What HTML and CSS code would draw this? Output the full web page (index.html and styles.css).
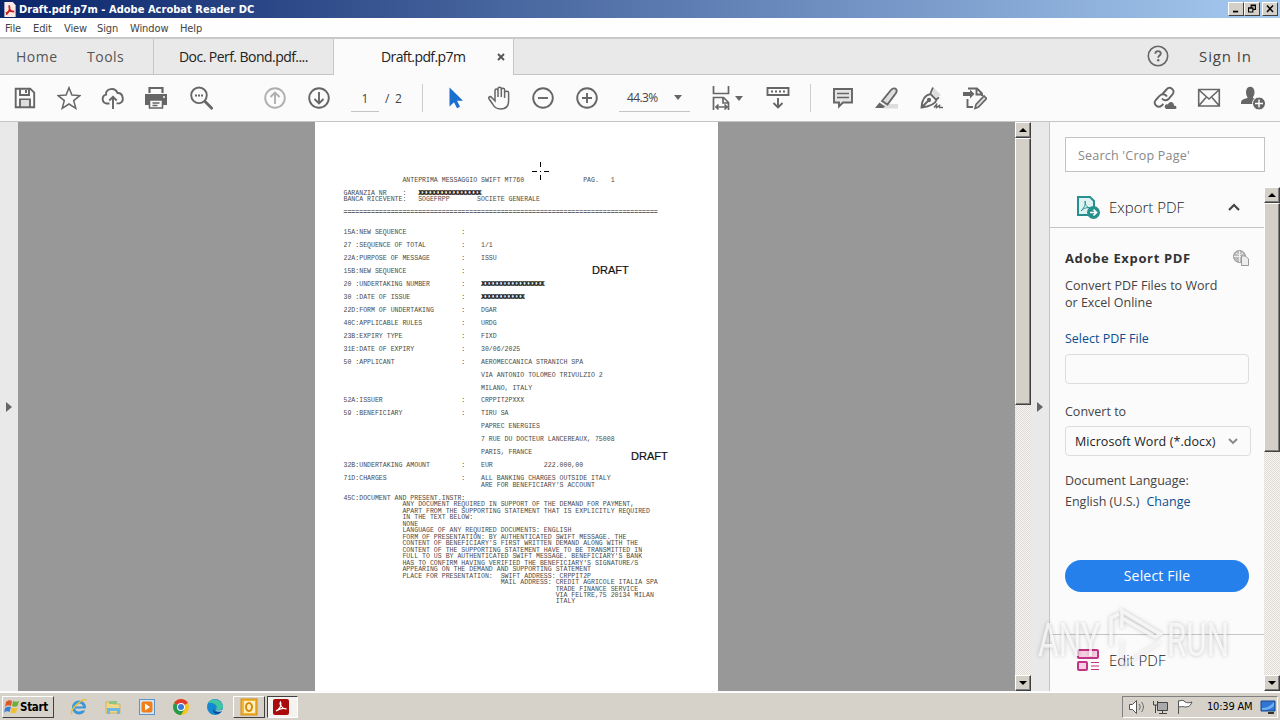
FILE: index.html
```html
<!DOCTYPE html>
<html lang="en">
<head>
<meta charset="utf-8">
<title>Draft.pdf.p7m - Adobe Acrobat Reader DC</title>
<link rel="stylesheet" href="styles.css">
</head>
<body>
<div class="desktop">
<header class="titlebar">
  <svg class="app-icon" viewBox="0 0 12 16"><path d="M0 0h9l3 3.500V16H0z" fill="#fbe9e7"/><path d="M2 13.500C5.500 10 6 6 5 3.500M5 4C5 8.500 7 10.500 10.500 10.500M1.500 12C4 9.500 7 9 10.500 10" fill="none" stroke="#c9201c" stroke-width="1.600"/></svg>
  <span class="title-text">Draft.pdf.p7m - Adobe Acrobat Reader DC</span>
  <div class="win-controls">
    <span class="win-btn"><svg viewBox="0 0 15 14"><path d="M4 10h6" stroke="#000" stroke-width="2"/></svg></span>
    <span class="win-btn"><svg viewBox="0 0 15 14"><path d="M6.500 5V2.500h5v5H9M6.500 3h5M3.500 5.500h5v5h-5zM3.500 6h5" fill="none" stroke="#000" stroke-width="1.300"/></svg></span>
    <span class="win-btn win-close"><svg viewBox="0 0 15 14"><path d="M4 3l7 7.500M11 3l-7 7.500" stroke="#000" stroke-width="1.700"/></svg></span>
  </div>
</header>
<nav class="menubar"><span class="m-file">File</span><span class="m-edit">Edit</span><span class="m-view">View</span><span class="m-sign">Sign</span><span class="m-window">Window</span><span>Help</span></nav>
<div class="tabbar">
  <div class="tab-home"><span class="t-home">Home</span><span class="t-tools">Tools</span></div>
  <div class="tab"><span class="t-doc">Doc. Perf. Bond.pdf....</span></div>
  <div class="tab tab-active"><span class="t-draft">Draft.pdf.p7m</span><svg class="tab-close" viewBox="0 0 8 8"><path d="M1 1l6 6M7 1L1 7" stroke="#555" stroke-width="1.900"/></svg></div>
  <div class="tab-right"><svg class="help" viewBox="0 0 22 22"><circle cx="11" cy="11" r="9.700" fill="none" stroke="#666" stroke-width="1.600"/><path d="M8.300 8.800c0-3.500 5.500-3.500 5.500-.3 0 2-2.600 2.100-2.600 4.200" fill="none" stroke="#666" stroke-width="1.800"/><circle cx="11.200" cy="15.300" r="1.200" fill="#666"/></svg><span class="signin">Sign In</span></div>
</div>
<div class="toolbar">
  <div class="group g-file">
    <span class="tool"><svg viewBox="0 0 24 24"><path d="M2.700 2.700h14.500l4 4v14.500H2.700z"/><path d="M7 3v6h9V3M13 4v3M7 21v-7.500h10V21" /><path d="M8 14h8v6H8z" fill="#ddd" stroke="none"/></svg></span>
    <span class="tool"><svg viewBox="0 0 24 24"><path d="M12 1.700l2.900 7.400 8 .5-6.200 5 2.100 7.700L12 18l-6.800 4.300 2.100-7.700-6.200-5 8-.5z" stroke-width="1.500"/></svg></span>
    <span class="tool"><svg viewBox="0 0 24 24"><path d="M8.500 17.500H5.500A4.500 4.500 0 0 1 5 8.700C4.500 2.500 14 .5 16.500 7c5.500-.5 7.500 8.500 2 10.400h-3"/><path d="M12 23V11M8.300 14.500L12 10.800l3.700 3.700"/></svg></span>
    <span class="tool tool-print"><svg viewBox="0 0 24 24"><path d="M5.500 7V2h13v5" stroke-width="2.200"/><path d="M1 8h22v11h-4v-5H5v5H1z" fill="#666" stroke="none"/><path d="M5.500 14h13v8h-13zM8.500 17h7M8.500 19.500h5" stroke-width="1.600"/><circle cx="20" cy="11" r="1" fill="#fff" stroke="none"/></svg></span>
    <span class="tool"><svg viewBox="0 0 24 24"><circle cx="10" cy="9.300" r="7.800"/><path d="M15.500 15l8 8" stroke-width="2.800"/><path d="M6 9.400h2M9 9.400h2M12 9.400h2" stroke-width="2"/></svg></span>
  </div>
  <div class="group g-page">
    <span class="tool disabled"><svg viewBox="0 0 24 24"><circle cx="12" cy="12" r="9.800"/><path d="M12 18V7M7.500 11L12 6.500l4.500 4.500"/></svg></span>
    <span class="tool"><svg viewBox="0 0 24 24"><circle cx="12" cy="12" r="9.800"/><path d="M12 6v11M7.500 13l4.500 4.500 4.500-4.500"/></svg></span>
    <span class="page-field">1</span><span class="page-total">/&nbsp; 2</span>
  </div>
  <i class="sep"></i>
  <div class="group g-view">
    <span class="tool"><svg viewBox="0 0 24 24"><path d="M6.500 1.500v19l4.500-4.200 3 6 3-1.500-3-6h6z" fill="#1b6fd0" stroke="none"/></svg></span>
    <span class="tool"><svg viewBox="0 0 24 24"><path d="M8 13V4.500c0-2 3-2 3 0V11 2.700c0-2 3.300-2 3.300 0V11 3.700c0-2 3.300-2 3.300 0V12 6.700c0-2 4-2 4 0V15c0 5-3 8-8 8-5 0-6.500-2-8-5L2 12.800c-1-2 1.500-3 2.700-1.200L8 15z" stroke-width="1.500"/></svg></span>
    <span class="tool"><svg viewBox="0 0 24 24"><circle cx="12" cy="12" r="9.800"/><path d="M7 12h10"/></svg></span>
    <span class="tool"><svg viewBox="0 0 24 24"><circle cx="12" cy="12" r="9.800"/><path d="M7 12h10M12 7v10"/></svg></span>
  </div>
  <div class="zoom"><span>44.3%</span><i class="caret"></i></div>
  <div class="fit"><svg viewBox="0 0 24 26"><path d="M4.500 1v7.500h15V1M4.500 25V12.500h10l5 5V25M14 13v5h5M7 22h11M9.500 19.500L7 22l2.500 2.500M15.500 19.500L18 22l-2.500 2.500" stroke-width="1.700"/></svg><i class="caret"></i></div>
  <div class="scrollmode"><svg viewBox="0 0 24 24"><path d="M1.500 2h21v7h-21zM12 12v9M7.500 17l4.500 4.500 4.500-4.500"/><path d="M5 5.500h14" stroke-dasharray="2 2"/></svg></div>
  <i class="sep"></i>
  <div class="group g-comment">
    <span class="tool"><svg viewBox="0 0 24 24"><path d="M3 3h18v13.500h-9l-4 4v-4H3z" fill="#e5e5e5"/><path d="M6 7.500h12M6 11.500h12" stroke-width="1.400"/></svg></span>
    <span class="tool"><svg viewBox="0 0 24 24"><path d="M9 18h14v4.500H7z" fill="#ddd" stroke="none"/><path d="M7 15L16 4c2.500-3 7.500-1.500 5 3l-8.500 11.500z" fill="#ddd"/><path d="M4.500 16.500l5.500 4-2 1.500H0z" fill="#666" stroke="none"/></svg></span>
    <span class="tool"><svg viewBox="0 0 24 24"><path d="M13 8l2-6 7 7-4 3z" fill="#ddd" stroke="none"/><path d="M2.500 21.500C3 14 5 9 11.500 8l6 6c-1.500 5-8 6.500-15 7.500zM3 21l6-6M11 8.500l3-7M17 13.500l3-2"/><circle cx="10" cy="14" r="1.200" fill="#666"/><path d="M15 21.500l2.500-3v3l3-2v2H24" stroke-width="1.500"/></svg></span>
    <span class="tool"><svg viewBox="0 0 24 24"><path d="M5 2.500h9l5 5V10M13.500 2.500v6H19M4.500 13v8H10"/><path d="M0 6h7V3.500L11.500 8 7 12.500V10H0z" fill="#666" stroke="none"/><path d="M12 22.500l1-4 8-8.500 2.500 2.500-8 8.500z" fill="#ddd" stroke-width="1.600"/></svg></span>
  </div>
  <div class="group g-share">
    <span class="tool"><svg viewBox="0 0 24 24"><path d="M9.500 8l4-4.500c3.500-4 9.500 1 6 4.800L15.500 13c-2 2-5 1.500-6.500-.5M14 10.500c-2-3-5.500-3-7.500-.5L2.800 14c-3.300 4 2 9 6 5.500l1.500-1.600"/><path d="M13 23c-3-3 0-5.500 2-4.500 1.500-4 6-2.500 6 1 3 0 3 3.500 1.500 3.500z" fill="#666" stroke="none"/></svg></span>
    <span class="tool"><svg viewBox="0 0 24 24"><path d="M1.700 3.500h20.600V20H1.700zM2 4l10 9L22 4M2 19.500l7-8M22 19.500l-7-8" stroke-width="1.600"/></svg></span>
    <span class="tool"><svg viewBox="0 0 24 24"><path d="M5 6c0-7 8.500-7 8.500 0 0 4-1.500 4-1.500 6l4 2c-4 2-2 4-2 4H0c0-4 1-4.500 6.500-6C6.500 10 5 10 5 6z" fill="#666" stroke="none"/><circle cx="18" cy="17.500" r="6.500" fill="#666" stroke="#fbfbfb" stroke-width="1"/><path d="M18 13.500v8M14 17.500h8" stroke="#fff" stroke-width="1.400"/></svg></span>
  </div>
</div>
<main class="workspace">
  <aside class="left-rail"><i class="arrow-right"></i></aside>
  <section class="viewer">
    <div class="page">
<pre class="doc">               ANTEPRIMA MESSAGGIO SWIFT MT760               PAG.   1

GARANZIA NR    :   <b>XXXXXXXXXXXXXXXX</b>
BANCA RICEVENTE:   SOGEFRPP       SOCIETE GENERALE

<span class="rule">================================================================================</span>


15A:NEW SEQUENCE              :

27 :SEQUENCE OF TOTAL         :    1/1

22A:PURPOSE OF MESSAGE        :    ISSU

15B:NEW SEQUENCE              :

20 :UNDERTAKING NUMBER        :    <b>XXXXXXXXXXXXXXXX</b>

30 :DATE OF ISSUE             :    <b>XXXXXXXXXXX</b>

22D:FORM OF UNDERTAKING       :    DGAR

40C:APPLICABLE RULES          :    URDG

23B:EXPIRY TYPE               :    FIXD

31E:DATE OF EXPIRY            :    30/06/2025

50 :APPLICANT                 :    AEROMECCANICA STRANICH SPA

                                   VIA ANTONIO TOLOMEO TRIVULZIO 2

                                   MILANO, ITALY

52A:ISSUER                    :    CRPPIT2PXXX

59 :BENEFICIARY               :    TIRU SA

                                   PAPREC ENERGIES

                                   7 RUE DU DOCTEUR LANCEREAUX, 75008

                                   PARIS, FRANCE

32B:UNDERTAKING AMOUNT        :    EUR             222.000,00

71D:CHARGES                   :    ALL BANKING CHARGES OUTSIDE ITALY
                                   ARE FOR BENEFICIARY'S ACCOUNT

45C:DOCUMENT AND PRESENT.INSTR:
               ANY DOCUMENT REQUIRED IN SUPPORT OF THE DEMAND FOR PAYMENT,
               APART FROM THE SUPPORTING STATEMENT THAT IS EXPLICITLY REQUIRED
               IN THE TEXT BELOW:
               NONE
               LANGUAGE OF ANY REQUIRED DOCUMENTS: ENGLISH
               FORM OF PRESENTATION: BY AUTHENTICATED SWIFT MESSAGE. THE
               CONTENT OF BENEFICIARY'S FIRST WRITTEN DEMAND ALONG WITH THE
               CONTENT OF THE SUPPORTING STATEMENT HAVE TO BE TRANSMITTED IN
               FULL TO US BY AUTHENTICATED SWIFT MESSAGE. BENEFICIARY'S BANK
               HAS TO CONFIRM HAVING VERIFIED THE BENEFICIARY'S SIGNATURE/S
               APPEARING ON THE DEMAND AND SUPPORTING STATEMENT
               PLACE FOR PRESENTATION:  SWIFT ADDRESS: CRPPIT2P
                                        MAIL ADDRESS: CREDIT AGRICOLE ITALIA SPA
                                                      TRADE FINANCE SERVICE
                                                      VIA FELTRE,75 20134 MILAN
                                                      ITALY</pre>
      <span class="stamp stamp-a">DRAFT</span>
      <span class="stamp stamp-b">DRAFT</span>
      <svg class="cross" viewBox="0 0 18 18"><path d="M9.500 0v5M9.500 13v5M1 9.500h5M13 9.500h5M9 9.500h1" stroke="#000"/></svg>
    </div>
  </section>
  <div class="scrollbar sb-doc"><span class="sb-btn"><i class="tri-up"></i></span><span class="sb-thumb"></span><span class="sb-track"></span><span class="sb-btn"><i class="tri-down"></i></span></div>
  <div class="right-rail"><i class="arrow-right"></i></div>
  <aside class="panel">
    <div class="search-wrap"><div class="search"><span>Search 'Crop Page'</span></div></div>
    <div class="panel-body">
      <div class="panel-main">
        <div class="export-head">
          <svg class="export-icon" viewBox="0 0 24 24"><path d="M2 2h12l4 4v14H2z" fill="#dff1f1" stroke="#26908f" stroke-width="2"/><path d="M5 16c4-4 5-8 4-10 0 5 3 7 6 7-4-1-7 0-10 3" fill="none" stroke="#26908f"/><circle cx="17.500" cy="17.500" r="6.500" fill="#26908f"/><path d="M14 17.500h6M17.500 14.500l3 3-3 3" fill="none" stroke="#fff" stroke-width="1.700"/></svg>
          <span class="panel-title t-export">Export PDF</span>
          <svg class="chev" viewBox="0 0 12 8"><path d="M1 7l5-5 5 5" fill="none" stroke="#444" stroke-width="2.200"/></svg>
        </div>
        <div class="export-body">
          <div class="export-row"><strong>Adobe Export PDF</strong><svg class="globe" viewBox="0 0 16 16"><circle cx="6.500" cy="6.500" r="6" fill="#bbb" stroke="#999"/><path d="M1 6.500h11M6.500 1v11M3 3c2 2 5 2 7 0" stroke="#eee" fill="none"/><path d="M8.500 6h4l3 3v6.500h-7z" fill="#eee" stroke="#999"/></svg></div>
          <p class="convert"><span class="c1">Convert PDF Files to Word</span><br><span class="c2">or Excel Online</span></p>
          <a class="link select-pdf">Select PDF File</a>
          <div class="file-input"></div>
          <span class="label to">Convert to</span>
          <div class="dropdown"><span>Microsoft Word (*.docx)</span><svg viewBox="0 0 10 7"><path d="M1 1l4 4 4-4" fill="none" stroke="#888" stroke-width="1.900"/></svg></div>
          <span class="label lang">Document Language:</span>
          <div class="lang-row"><span class="us">English (U.S.)</span><a class="link">Change</a></div>
          <div class="button"><span>Select File</span></div>
        </div>
        <div class="edit-head">
          <svg class="edit-icon" viewBox="0 0 24 24"><g fill="#f6cfe2" stroke="#c23585" stroke-width="2"><rect x="2" y="2" width="20" height="8" rx="1"/><rect x="2" y="14" width="9" height="8" rx="1"/></g><path d="M15 14.500h8M15 18h8M15 21.500h8" stroke="#c23585" stroke-width="1.200"/></svg>
          <span class="panel-title t-editpdf">Edit PDF</span>
        </div>
      </div>
      <div class="scrollbar sb-panel"><span class="sb-btn"><i class="tri-up"></i></span><span class="sb-thumb"></span><span class="sb-track"></span><span class="sb-btn"><i class="tri-down"></i></span></div>
    </div>
  </aside>
</main>
<footer class="taskbar">
  <div class="start"><svg viewBox="0 0 16 16"><path d="M2 3c2-2 4-2 6-1L7 7C5 6 3 6 1 8z" fill="#e0572a"/><path d="M9 2c2 1 4 1 6 0l-1.500 5c-2 1-4 1-5.500 0z" fill="#6fae3c"/><path d="M1 9c2-1.500 4-1.500 6-1l-1.500 5c-2-1-4-1-5.500 1z" fill="#3d7fd0"/><path d="M8 8.500c2 1 3.500 1 5.500 0L12 13.500c-2 1-4 1-5.500 0z" fill="#f2c02e"/></svg><b>Start</b></div>
  <div class="quick">
    <svg viewBox="0 0 18 18"><circle cx="9" cy="9.500" r="5.500" fill="none" stroke="#3597dc" stroke-width="3"/><path d="M5 9.500h9" stroke="#3597dc" stroke-width="2"/><path d="M11.500 11.500h5" stroke="#d6d2ca" stroke-width="2"/><path d="M2 16C-1 13 11 0 16.500 2" fill="none" stroke="#efbd39" stroke-width="1.500"/></svg>
    <svg viewBox="0 0 18 18"><path d="M2 4h6l1 2h7v9H2z" fill="#f0d789" stroke="#c6a64c" stroke-width=".7"/><path d="M5 3h8v3H5z" fill="#8bc780"/><path d="M3 10h13v6h-3v-3H6v3H3z" fill="#6bb8e4"/></svg>
    <svg viewBox="0 0 18 18"><rect x="1.500" y="1.500" width="15" height="15" fill="#d5e5f4" stroke="#5e93c6"/><rect x="3.500" y="3.500" width="11" height="11" rx="2" fill="#ef7f1a"/><path d="M7 5.500l5 3.500-5 3.500z" fill="#fff"/></svg>
    <svg viewBox="0 0 18 18"><circle cx="9" cy="9" r="8" fill="#f8c51c"/><path d="M9 9L2.100 5A8 8 0 0 1 15.900 5z" fill="#df3b2f"/><path d="M9 9L2.100 5A8 8 0 0 0 9 17l3.500-6z" fill="#27994b"/><circle cx="9" cy="9" r="4" fill="#fff"/><circle cx="9" cy="9" r="3" fill="#3979d8"/></svg>
    <svg viewBox="0 0 18 18"><circle cx="9" cy="9" r="8" fill="#1688cf"/><path d="M2 5c4-6 13-4 15 3 0 4-4 5-7 3 3-4-4-7-8-6z" fill="#3fc6a1"/><path d="M8 8c-3 4 2 8 8 5-4 6-12 2-8-5z" fill="#0b4c99"/><path d="M10 11c1 2 4 2 7 0l-1 2c-3 1-6 1-6-2z" fill="#d6d2ca"/></svg>
  </div>
  <div class="task"><svg viewBox="0 0 18 18"><rect x="1" y="1" width="16" height="16" fill="#f2b52d" stroke="#d48b13"/><rect x="4" y="3" width="11" height="12" fill="#fff0bd"/><ellipse cx="9" cy="9" rx="3" ry="4" fill="none" stroke="#d58a0c" stroke-width="2"/></svg></div>
  <div class="task task-on"><svg viewBox="0 0 18 18"><rect x="1" y="1" width="16" height="16" rx="2" fill="#a90b0b"/><path d="M4 13c4-2 6-6 4.500-9C7 6 10 11 14.500 11 11 9.500 7 11 4 13z" fill="none" stroke="#fff" stroke-width="1.200"/></svg></div>
  <div class="tray">
    <svg viewBox="0 0 18 16"><path d="M1.500 5.500h3l4-4v13l-4-4h-3z" fill="#fff" stroke="#555"/><path d="M11 5c1.500 2 1.500 4 0 6M13.500 3c2.500 3 2.500 7 0 10" fill="none" stroke="#666"/></svg>
    <svg viewBox="0 0 18 16"><path d="M5.500 3.500h10v8h-10z" fill="#aaa" stroke="#444"/><path d="M7 14.500h8M10.500 12v2M1.500 2v4h4V2M3.500 6v8" fill="none" stroke="#444"/></svg>
    <svg viewBox="0 0 18 16"><path d="M2.500 15V1.500M3 2c3-1 5-1 6 1 2 1 4 1 7 0-1 3-3 5-6 5-2 0-3-1-7 0" fill="#fff" stroke="#555"/></svg>
    <span class="clock">10:39 AM</span>
    <svg viewBox="0 0 18 16"><path d="M2 2h14v10H2z" fill="#2f75d1" stroke="#174a8c"/><path d="M3 9c5 0 8-2 12-6v4c-4 4-8 4-12 4z" fill="#70adf0"/><path d="M9 14h6" stroke="#333" stroke-width="2"/></svg>
  </div>
</footer>
<svg class="watermark" viewBox="0 0 220 84"><g class="wm-shape"><text x="8" y="56" textLength="62" lengthAdjust="spacingAndGlyphs">ANY</text><text x="137" y="56" textLength="62" lengthAdjust="spacingAndGlyphs">RUN</text><path d="M81 46V18l8-4M92 28V11l38 23-5 3-33-19"/><path class="wm-soft" d="M92 40v26l38-24"/></g></svg>
</div>
</body>
</html>
```
FILE: styles.css
```css
* { box-sizing: border-box; }
body { margin: 0; font-family: "Open Sans", "Noto Sans", sans-serif; color: #444; }
svg, i { display: block; flex: none; }
span, strong, a { white-space: nowrap; }
.desktop { position: relative; width: 1280px; height: 720px; overflow: hidden; display: flex; flex-direction: column; background: #fbfbfb; }
.desktop > * { flex: none; }
.titlebar { height: 18px; display: flex; align-items: center; padding: 0 2px 0 4px; background: linear-gradient(90deg, #0a246a, #a6caf0); font-family: "DejaVu Sans Condensed", "DejaVu Sans", sans-serif; }
.app-icon { width: 12px; height: 15px; }
.title-text { margin-left: 3px; color: #fff; font-size: 11px; font-weight: bold; letter-spacing: .03px; }
.win-controls { margin-left: auto; display: flex; }
.win-btn { width: 16px; height: 14px; background: #d4d0c8; border: 1px solid; border-color: #fff #404040 #404040 #fff; }
.win-btn svg { width: 14px; height: 12px; }
.win-close { margin-left: 2px; }
.menubar { height: 19px; display: flex; align-items: center; padding: 1px 0 0 5px; background: #fefefe; font-family: "DejaVu Sans Condensed", "DejaVu Sans", sans-serif; font-size: 11px; letter-spacing: -.1px; }
.m-file { width: 28px; } .m-edit { width: 31px; } .m-view { width: 33px; } .m-sign { width: 33px; } .m-window { width: 50px; }
.tabbar { height: 38px; display: flex; background: #e9e9e9; border-top: 2px solid #c9c9c9; border-bottom: 1px solid #c5c5c5; font-size: 14px; }
.tab-home { width: 154px; padding-left: 16px; display: flex; align-items: center; border-right: 1px solid #c5c5c5; color: #555; letter-spacing: .5px; }
.t-home { width: 71px; }
.tab { width: 180px; display: flex; align-items: center; padding-left: 25px; border-right: 1px solid #c5c5c5; color: #222; }
.tab-active { height: 36px; background: #fbfbfb; padding: 0 0 1px 47px; }
.t-doc { letter-spacing: -.55px; } .t-draft { letter-spacing: -.6px; width: 116px; }
.tab-close { width: 8px; height: 8px; }
.tab-right { margin-left: auto; display: flex; align-items: center; width: 133px; padding-bottom: 2px; }
.help { width: 22px; height: 22px; }
.signin { margin-left: 30px; font-size: 15px; letter-spacing: 1.000px; letter-spacing: .9px; }
.toolbar { height: 47px; display: flex; align-items: center; padding: 0 5px 0 3px; background: #fbfbfb; border-bottom: 1px solid #c5c5c5; font-size: 12px; }
.toolbar svg { width: 24px; height: 24px; fill: none; stroke: #666; stroke-width: 1.9; }
.group { display: flex; align-items: center; }
.tool { width: 44px; display: flex; justify-content: center; }
.tool-print { padding-right: 2px; }
.disabled { opacity: .5; }
.g-page { margin-left: 30px; width: 169px; }
.page-field { margin-left: 10px; width: 28px; height: 27px; line-height: 27px; text-align: center; border-bottom: 1px solid #c5c5c5; }
.page-total { margin-left: 6px; letter-spacing: -.2px; }
.sep { width: 1px; height: 28px; background: #ccc; }
.g-view { margin-left: 10px; }
.zoom { margin-left: 10px; width: 71px; height: 27px; padding: 0 8px; display: flex; align-items: center; justify-content: space-between; border-bottom: 1px solid #c5c5c5; letter-spacing: -.6px; }
.caret { border: 4px solid transparent; border-top: 5px solid #666; border-bottom: 0; }
.fit { margin-left: 19px; display: flex; align-items: center; gap: 2px; }
.toolbar .fit svg { height: 26px; }
.scrollmode { margin: 0 20px 0 23px; }
.g-comment { margin-left: 10px; }
.g-share { margin-left: auto; }
.workspace { height: 569px; display: flex; }
.left-rail { width: 18px; background: #e9e9e9; display: flex; align-items: center; padding-left: 6px; }
.arrow-right { border: 5px solid transparent; border-left: 6px solid #666; border-right: 0; }
.viewer { width: 997px; background: #989898; padding-left: 297px; }
.page { position: relative; width: 403px; height: 569px; background: #fff; }
.doc { margin: 0; padding: 56px 0 0 28.500px; font: 6.560px/6.485px "Liberation Mono", monospace; color: #4a4a4a; }
.doc b { color: #111; text-shadow: 1px 0 0 #666; font-weight: bold; }
.rule { color: #111; -webkit-text-stroke: .2px #111; }
.stamp { position: absolute; font: 11px/12px "Liberation Sans", Arial, sans-serif; color: #111; -webkit-text-stroke: .2px #111; }
.stamp-a { left: 277px; top: 142px; } .stamp-b { left: 316px; top: 328px; }
.cross { position: absolute; left: 216px; top: 40px; width: 18px; height: 18px; }
.scrollbar { width: 16px; display: flex; flex-direction: column; background: repeating-conic-gradient(#dedbd5 0 25%, #f6f5f3 0 50%) 0 0/2px 2px; }
.sb-btn { height: 16px; display: flex; align-items: center; justify-content: center; }
.sb-btn, .sb-thumb { background: #d4d0c8; border: 1px solid; border-color: #fff #404040 #404040 #fff; box-shadow: inset -1px -1px #808080; }
.sb-track { flex: 1; }
.sb-doc .sb-thumb { height: 267px; }
.sb-panel .sb-thumb { height: 249px; }
.tri-up { border: 4px solid transparent; border-bottom: 4px solid #000; border-top: 0; }
.tri-down { border: 4px solid transparent; border-top: 4px solid #000; border-bottom: 0; }
.right-rail { width: 19px; background: #e9e9e9; border-right: 1px solid #c5c5c5; display: flex; align-items: center; padding-left: 6px; }
.panel { width: 230px; display: flex; flex-direction: column; font-size: 12.500px; }
.search-wrap { height: 65px; padding: 15px 0 0 15px; }
.search { width: 200px; height: 35px; border: 1px solid #c3c3c3; background: #fff; padding: 1px 0 0 12px; display: flex; align-items: center; color: #888; }
.search span { letter-spacing: .22px; }
.panel-body { flex: 1; display: flex; }
.panel-main { width: 214px; display: flex; flex-direction: column; }
.export-head { height: 41px; display: flex; align-items: center; padding-left: 26px; border-bottom: 1px solid #c5c5c5; }
.export-icon, .edit-icon { width: 24px; height: 24px; }
.panel-title { margin-left: 9px; font-size: 15px; font-weight: 300; width: 119px; color: #222; }
.chev { width: 12px; height: 8px; }
.export-body { height: 406px; padding: 20px 0 0 15px; display: flex; flex-direction: column; align-items: flex-start; }
.export-row { width: 184px; height: 20px; display: flex; align-items: center; justify-content: space-between; color: #333; }
.export-row strong { font-size: 13px; letter-spacing: .65px; }
.globe { width: 16px; height: 16px; }
.convert { margin: 9px 0 0; line-height: 17px; }
.c1 { letter-spacing: .04px; }
.link { color: #0b4f8f; }
.select-pdf { margin-top: 19px; line-height: 17px; }
.file-input { margin-top: 7px; width: 184px; height: 30px; border: 1px solid #ddd; border-radius: 4px; }
.to { margin-top: 19px; line-height: 17px; }
.dropdown { margin-top: 6px; width: 186px; height: 30px; border: 1px solid #ddd; border-radius: 4px; display: flex; align-items: center; justify-content: space-between; padding: 1px 12px 0 9px; color: #222; letter-spacing: .08px; }
.dropdown svg { width: 10px; height: 7px; }
.lang { margin-top: 16px; line-height: 17px; }
.lang-row { margin-top: 4px; display: flex; gap: 7px; line-height: 17px; }
.button { margin-top: 50px; width: 184px; height: 32px; border-radius: 16px; background: #2680eb; color: #fff; display: flex; align-items: center; justify-content: center; font-size: 14px; padding-bottom: 1px; letter-spacing: .2px; }
.edit-head { border-top: 1px solid #c5c5c5; padding: 13px 0 0 26px; display: flex; align-items: center; }
.taskbar { height: 28px; margin-top: 1px; display: flex; align-items: center; background: #d6d2ca; border-top: 1px solid #fff; padding-left: 2px; font-family: "DejaVu Sans Condensed", "DejaVu Sans", sans-serif; font-size: 11px; color: #000; }
.start { width: 52px; height: 22px; display: flex; align-items: center; border: 1px solid; border-color: #fff #404040 #404040 #fff; padding-left: 1px; }
.start svg { width: 16px; height: 16px; }
.start b { font-size: 11.500px; letter-spacing: -.3px; }
.quick { margin-left: 16px; display: flex; gap: 16px; width: 163px; }
.quick svg, .task svg { width: 18px; height: 18px; }
.task { width: 32px; height: 22px; display: flex; align-items: center; justify-content: center; border: 1px solid; border-color: #fff #404040 #404040 #fff; margin-right: 2px; }
.task-on { width: 31px; background: #f5f3f0; border-color: #404040 #fff #fff #404040; padding-right: 3px; }
.tray { margin-left: auto; width: 156px; height: 22px; margin-right: 2px; display: flex; align-items: center; border: 1px solid; border-color: #808080 #fff #fff #808080; padding-left: 5px; gap: 6px; }
.tray svg { width: 18px; height: 16px; }
.clock { width: 46px; margin: 0 1px 0 7px; letter-spacing: -.2px; }
.watermark { position: absolute; left: 1030px; top: 600px; width: 220px; height: 84px; filter: drop-shadow(0 0 2px rgba(0,0,0,.3)); }
.wm-shape { opacity: .72; }
.wm-shape text { font: 47px Roboto, sans-serif; fill: #fff; }
.wm-shape path { fill: none; stroke: #fff; stroke-width: 3.500; }
.wm-shape .wm-soft { opacity: .5; }
```
